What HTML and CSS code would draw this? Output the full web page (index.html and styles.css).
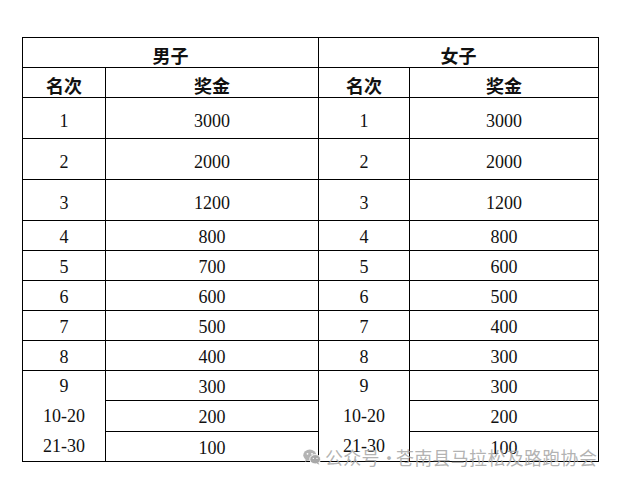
FILE: index.html
```html
<!DOCTYPE html>
<html lang="zh-CN">
<head>
<meta charset="utf-8">
<title>奖金</title>
<link rel="stylesheet" href="styles.css">
</head>
<body>
<div class="page">
  <table class="prize">
    <colgroup>
      <col class="c1"><col class="c2"><col class="c3"><col class="c4">
    </colgroup>
    <thead>
      <tr class="hrow">
        <th colspan="2">男子</th>
        <th colspan="2">女子</th>
      </tr>
      <tr class="hrow">
        <th>名次</th><th>奖金</th><th>名次</th><th>奖金</th>
      </tr>
    </thead>
    <tbody>
      <tr class="tall"><td>1</td><td>3000</td><td>1</td><td>3000</td></tr>
      <tr class="tall"><td>2</td><td>2000</td><td>2</td><td>2000</td></tr>
      <tr class="tall"><td>3</td><td>1200</td><td>3</td><td>1200</td></tr>
      <tr><td>4</td><td>800</td><td>4</td><td>800</td></tr>
      <tr><td>5</td><td>700</td><td>5</td><td>600</td></tr>
      <tr><td>6</td><td>600</td><td>6</td><td>500</td></tr>
      <tr><td>7</td><td>500</td><td>7</td><td>400</td></tr>
      <tr><td>8</td><td>400</td><td>8</td><td>300</td></tr>
      <tr>
        <td rowspan="3" class="merged"><div class="lines"><span>9</span><span>10-20</span><span>21-30</span></div></td>
        <td>300</td>
        <td rowspan="3" class="merged"><div class="lines"><span>9</span><span>10-20</span><span>21-30</span></div></td>
        <td>300</td>
      </tr>
      <tr><td>200</td><td>200</td></tr>
      <tr><td>100</td><td>100</td></tr>
    </tbody>
  </table>
  <div class="watermark">
    <svg class="wx" width="18" height="18" viewBox="0 0 20 18" aria-hidden="true">
      <ellipse cx="7.5" cy="7" rx="7.2" ry="6.2" fill="#b4b4b4"/>
      <path d="M3 11.5 L2.2 14.5 L5.5 12.5 Z" fill="#b4b4b4"/>
      <ellipse cx="13.5" cy="11.5" rx="6" ry="5.2" fill="#a8a8a8" stroke="#fff" stroke-width="1"/>
      <path d="M17 15 L18.2 17.6 L15 16 Z" fill="#a8a8a8"/>
      <circle cx="5" cy="5.5" r="1" fill="#fff"/>
      <circle cx="10" cy="5.5" r="1" fill="#fff"/>
      <circle cx="11.5" cy="10.5" r="0.8" fill="#fff"/>
      <circle cx="15.5" cy="10.5" r="0.8" fill="#fff"/>
    </svg>
    <span class="wtext">公众号</span><span class="wtext wdot">·</span><span class="wtext">苍南县马拉松及路跑协会</span>
  </div>
</div>
</body>
</html>
```

FILE: styles.css
```css
html, body {
  margin: 0;
  padding: 0;
  background: #fff;
}

.page {
  position: relative;
  width: 617px;
  height: 483px;
  padding: 37px 0 0 22px;
  box-sizing: border-box;
  overflow: hidden;
}

.prize {
  border-collapse: collapse;
  table-layout: fixed;
  width: 576px;
  color: #111;
}

.c1 { width: 83px; }
.c2 { width: 213px; }
.c3 { width: 91px; }
.c4 { width: 189px; }

.prize tr { height: 30px; }
.prize tr.tall { height: 41px; }

.prize th,
.prize td {
  border: 1px solid #000;
  text-align: center;
  padding: 3px 0 0;
  line-height: 20px;
}

.prize th {
  font-family: "Noto Sans CJK SC", sans-serif;
  font-weight: 700;
  font-size: 18px;
  padding-top: 4px;
}

.prize td {
  font-family: "Liberation Serif", "Noto Sans CJK SC", serif;
  font-size: 18px;
}

.prize tr.tall td {
  padding-top: 5px;
}

.prize td.merged {
  padding: 0;
  vertical-align: top;
}

.lines {
  display: flex;
  flex-direction: column;
}

.lines span {
  height: 30px;
  line-height: 30px;
  box-sizing: border-box;
}

.watermark {
  position: absolute;
  left: 303px;
  top: 445px;
  display: flex;
  align-items: center;
  white-space: nowrap;
  pointer-events: none;
}

.wx {
  margin-right: 4px;
}

.wtext {
  font-family: "Noto Sans CJK SC", sans-serif;
  font-size: 18px;
  letter-spacing: 0.3px;
  line-height: 24px;
  color: rgba(165, 165, 165, 0.85);
}

.wdot {
  width: 16px;
  letter-spacing: 0;
  text-align: center;
}
```
